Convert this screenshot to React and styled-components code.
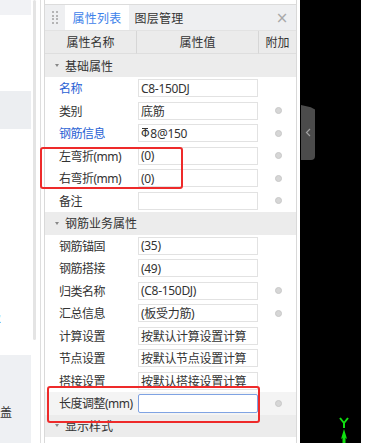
import React from "react";
import styled, { createGlobalStyle } from "styled-components";

const GlobalStyle = createGlobalStyle`
  html, body { margin: 0; padding: 0; background: #ffffff; }
  body { font-family: "Noto Sans", "Noto Sans CJK SC", "Liberation Sans", sans-serif; }
  * { box-sizing: border-box; }
`;

const Page = styled.div`
  width: 377px;
  height: 443px;
  overflow: hidden;
  display: flex;
  background: #ffffff;
  position: relative;
`;

const LeftStrip = styled.div`
  width: 41px;
  flex: none;
  border-right: 1px solid #dedede;
  display: grid;
  grid-template-columns: 31px 2px 3px;
  align-items: start;
`;

const StripColumn = styled.div`
  display: flex;
  flex-direction: column;
  height: 443px;
  overflow: hidden;
`;

const Block = styled.div`
  flex: none;
  height: ${(p) => p.$h}px;
  margin-top: ${(p) => p.$mt || 0}px;
  background: ${(p) => p.$bg || "#f0f1f4"};
  position: relative;
  overflow: hidden;
`;

const Fragment = styled.div`
  height: ${(p) => p.$h}px;
  margin-top: ${(p) => p.$mt || 0}px;
  font-size: 12px;
  line-height: ${(p) => p.$h}px;
  color: ${(p) => p.$color || "#333"};
  margin-left: ${(p) => p.$ml || 0}px;
  white-space: nowrap;
  overflow: visible;
`;

const Scrollbar = styled.div`
  grid-column: 3;
  width: 3px;
  height: 340px;
  background: #e4e4e4;
  border-radius: 2px;
`;

const Panel = styled.div`
  width: 253px;
  flex: none;
  margin-left: 3px;
  border-left: 1px solid #d9d9d9;
  border-right: 1px solid #d9d9d9;
  display: flex;
  flex-direction: column;
  height: 443px;
  overflow: hidden;
  background: #ffffff;
`;

const TopStrip = styled.div`
  height: 5px;
  flex: none;
  border-bottom: 1px solid #dcdcdc;
  background: #ffffff;
`;

const TabBar = styled.div`
  height: 26px;
  flex: none;
  display: flex;
  align-items: stretch;
  background: #eeeff1;
  border-bottom: 1px solid #e2e2e2;
  font-size: 12px;
`;

const Grip = styled.div`
  width: 20px;
  display: grid;
  grid-template-columns: repeat(2, 2px);
  grid-auto-rows: 2px;
  column-gap: 2px;
  row-gap: 1.5px;
  align-content: center;
  padding-left: 7px;
`;

const Dot = styled.span`
  width: 2px;
  height: 2px;
  background: #a0a0a0;
  border-radius: 1px;
`;

const Tab = styled.div`
  display: flex;
  align-items: center;
  justify-content: center;
  width: ${(p) => p.$w}px;
  background: ${(p) => (p.$active ? "#ffffff" : "transparent")};
  color: ${(p) => (p.$active ? "#3d82ea" : "#333333")};
  letter-spacing: 0.3px;
`;

const CloseBtn = styled.div`
  margin-left: auto;
  width: 28px;
  display: flex;
  align-items: center;
  justify-content: center;
  color: #a8a8a8;
  font-size: 15px;
  font-family: "DejaVu Sans", sans-serif;
`;

const Row = styled.div`
  display: grid;
  grid-template-columns: 92px 122px 37px;
  height: ${(p) => p.$h || 22.5}px;
  flex: none;
  font-size: 12px;
  color: #333;
  background: ${(p) => p.$bg || "#ffffff"};
`;

const HeadCell = styled.div`
  display: flex;
  align-items: center;
  justify-content: center;
  background: #ebebeb;
  border-right: ${(p) => (p.$last ? "none" : "1px solid #d6d6d6")};
  border-bottom: 1px solid #dedede;
  color: #333;
`;

const Section = styled.div`
  height: ${(p) => p.$h || 22.5}px;
  flex: none;
  display: flex;
  align-items: center;
  background: #ececec;
  font-size: 12px;
  color: #333;
  padding-left: 10px;
  gap: 6px;
`;

const Caret = styled.span`
  width: 0;
  height: 0;
  border-left: 2.5px solid transparent;
  border-right: 2.5px solid transparent;
  border-top: 3px solid #888;
`;

const NameCell = styled.div`
  display: flex;
  align-items: center;
  padding-left: 14px;
  color: ${(p) => (p.$link ? "#2a62d4" : "#333")};
  white-space: nowrap;
  letter-spacing: -0.5px;
`;

const ValueCell = styled.div`
  display: flex;
  align-items: center;
  padding-left: 1px;
`;

const ValueBox = styled.div`
  width: 120px;
  height: ${(p) => (p.$focus ? 19 : 18)}px;
  border: 1px solid ${(p) => (p.$focus ? "#7fa3e3" : "#e2e2e2")};
  border-radius: ${(p) => (p.$focus ? 2 : 0)}px;
  background: #ffffff;
  display: flex;
  align-items: center;
  padding-left: 2px;
  white-space: nowrap;
  overflow: hidden;
  color: #333;
  letter-spacing: -0.3px;
`;

const RebarMark = styled.span`
  position: relative;
  font-size: 11px;
  font-family: "DejaVu Sans", sans-serif;
  margin-right: 1px;
  &::before {
    content: "";
    position: absolute;
    left: 1px;
    right: 1px;
    top: 1px;
    height: 1px;
    background: #333;
  }
`;

const AttachCell = styled.div`
  display: flex;
  align-items: center;
  justify-content: center;
  padding-left: 1px;
`;

const AttachDot = styled.span`
  width: 7px;
  height: 7px;
  border-radius: 50%;
  background: #d6d6d6;
  border: 1px solid #c8c8c8;
`;

const Viewport = styled.div`
  width: 61px;
  flex: none;
  margin-left: 3px;
  background: #000000;
  height: 443px;
  display: flex;
  flex-direction: column;
  position: relative;
`;

const Handle = styled.div`
  margin-top: 105px;
  margin-left: 1px;
  width: 14px;
  height: 55px;
  background: #4b4b4b;
  border-radius: 0 4px 4px 0;
  clip-path: polygon(0 0, 70% 4%, 100% 8%, 100% 100%, 0 100%);
  display: flex;
  align-items: center;
  justify-content: center;
  color: #9a9a9a;
`;

const Axis = styled.svg`
  margin-top: auto;
  margin-left: 38px;
  display: block;
`;

const Annotation = styled.div`
  position: absolute;
  left: ${(p) => p.$x}px;
  top: ${(p) => p.$y}px;
  width: ${(p) => p.$w}px;
  height: ${(p) => p.$h}px;
  border: 2px solid #ee2a2a;
  border-radius: 3px;
  pointer-events: none;
`;

const rows1 = [
  { name: "名称", value: "C8-150DJ", link: true, dot: false },
  { name: "类别", value: "底筋", dot: true },
  { name: "钢筋信息", value: "rebar", link: true, dot: true },
  { name: "左弯折(mm)", value: "(0)", dot: true },
  { name: "右弯折(mm)", value: "(0)", dot: true },
  { name: "备注", value: "", dot: true },
];

const rows2 = [
  { name: "钢筋锚固", value: "(35)" },
  { name: "钢筋搭接", value: "(49)" },
  { name: "归类名称", value: "(C8-150DJ)", dot: true },
  { name: "汇总信息", value: "(板受力筋)", dot: true },
  { name: "计算设置", value: "按默认计算设置计算" },
  { name: "节点设置", value: "按默认节点设置计算" },
  { name: "搭接设置", value: "按默认搭接设置计算" },
];

function DataRow({ r, bg, focus }) {
  return (
    <Row $bg={bg}>
      <NameCell $link={r.link}>{r.name}</NameCell>
      <ValueCell>
        <ValueBox $focus={focus}>
          {r.value === "rebar" ? (
            <>
              <RebarMark>Φ</RebarMark>8@150
            </>
          ) : (
            r.value
          )}
        </ValueBox>
      </ValueCell>
      <AttachCell>{r.dot && <AttachDot />}</AttachCell>
    </Row>
  );
}

export default function App() {
  return (
    <>
      <GlobalStyle />
      <Page>
        <LeftStrip>
          <StripColumn>
            <Block $h={15} $bg="#f1f2f5" />
            <Block $h={38} $mt={76} $bg="#eceef1" />
            <Fragment $h={10} $mt={184} $ml={-11} $color="#2a62d4">
              级
            </Fragment>
            <Block $h={88} $mt={32} $bg="#eef0f3">
              <Fragment $h={10} $mt={4} $ml={-10} $color="#2a62d4">
                ：
              </Fragment>
              <Fragment $h={16} $mt={36} $ml={-12}>
                覆盖
              </Fragment>
            </Block>
          </StripColumn>
          <Scrollbar />
        </LeftStrip>

        <Panel>
          <TopStrip />
          <TabBar>
            <Grip>
              {Array.from({ length: 8 }).map((_, i) => (
                <Dot key={i} />
              ))}
            </Grip>
            <Tab $active $w={64}>属性列表</Tab>
            <Tab $w={60}>图层管理</Tab>
            <CloseBtn>×</CloseBtn>
          </TabBar>
          <Row $h={23}>
            <HeadCell>属性名称</HeadCell>
            <HeadCell>属性值</HeadCell>
            <HeadCell $last>附加</HeadCell>
          </Row>
          <Section $h={23}>
            <Caret />
            基础属性
          </Section>
          {rows1.map((r) => (
            <DataRow key={r.name} r={r} />
          ))}
          <Section>
            <Caret />
            钢筋业务属性
          </Section>
          {rows2.map((r) => (
            <DataRow key={r.name} r={r} />
          ))}
          <DataRow r={{ name: "长度调整(mm)", value: "", dot: true }} bg="#f4f4f4" focus />
          <Section>
            <Caret />
            显示样式
          </Section>
        </Panel>

        <Viewport>
          <Handle>
            <svg width="6" height="9" viewBox="0 0 6 9">
              <path d="M5 1 L1.5 4.5 L5 8" stroke="#a0a0a0" strokeWidth="1.2" fill="none" />
            </svg>
          </Handle>
          <Axis width="12" height="26" viewBox="0 0 12 26">
            <path d="M2 1 L6 6 L10 1 M6 6 L6 11" stroke="#10e010" strokeWidth="2" fill="none" />
            <path d="M6 12 L9 22 L6 20 L3 22 Z" fill="#10e010" />
            <rect x="4.5" y="19" width="3" height="7" fill="#10e010" />
          </Axis>
        </Viewport>

        <Annotation $x={40} $y={147} $w={143} $h={42} />
        <Annotation $x={47} $y={386} $w={213} $h={37} />
      </Page>
    </>
  );
}
